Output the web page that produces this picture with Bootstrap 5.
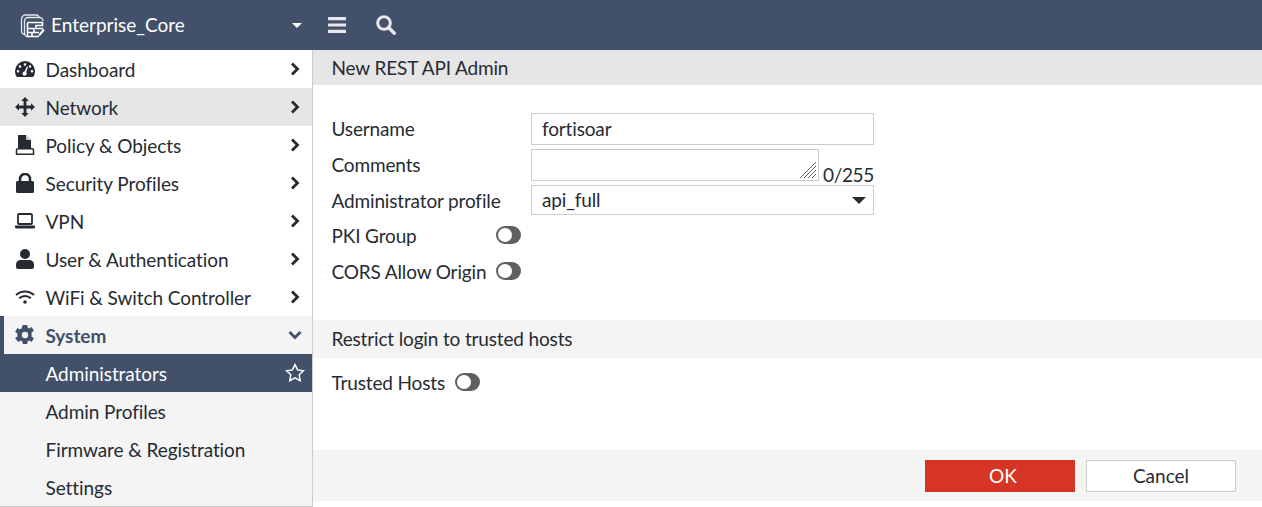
<!DOCTYPE html>
<html lang="en">

<head>
  <meta charset="UTF-8">
  <meta name="viewport" content="width=device-width, initial-scale=1.0">
  <title>New REST API Admin</title>
  <link href="https://cdn.jsdelivr.net/npm/bootstrap@5.3.3/dist/css/bootstrap.min.css" rel="stylesheet" />
  <style>
    html, body { height: 507px; overflow: hidden; }
    body { font-family: Lato, "Liberation Sans", sans-serif; font-size: 19px; letter-spacing: -.15px; color: #262b33; background: #fff; }
    .top-bar { height: 50px; background: #42506a; color: #fff; }
    .brand-box { width: 313px; padding: 0 11px 0 20px; }
    .brand-name { margin-left: 6px; letter-spacing: 0; }
    .brand-caret { width: 0; height: 0; border-left: 5px solid transparent; border-right: 5px solid transparent; border-top: 5px solid #fff; }
    .top-icon { color: #e6e8ec; }
    .menu-ico { margin-left: 15px; }
    .find-ico { margin-left: 30px; }
    .side-menu { width: 313px; height: 457px; border-right: 1px solid #ccc; border-bottom: 1px solid #ccc; background: #fff; overflow: hidden; flex: none; letter-spacing: -.07px; }
    .side-item { height: 38px; padding: 2px 12px 0 14px; color: #262b33; text-decoration: none; }
    .side-item .side-ico { width: 21px; margin-right: 10.5px; margin-top: -2px; flex: none; display: flex; justify-content: center; }
    .side-item .side-arrow { margin-top: -3px; }
    .side-item.is-hover { background: #e6e6e6; }
    .side-item.is-open { background: #f4f4f4; border-left: 4px solid #42506a; padding-left: 10px; padding-right: 10px; color: #42506a; font-weight: 700; }
    .side-item.is-active { background: #42506a; color: #fff; padding-left: 45.5px; padding-right: 7px; }
    .side-sub { background: #f4f4f4; }
    .side-sub .side-item { padding-left: 45.5px; }
    .page-title { height: 35px; background: #e6e6e6; padding: 2px 0 0 18.5px; }
    .form-area { padding: 28px 0 0 18.5px; height: 235px; }
    .form-line { height: 36px; }
    .form-lbl { width: 199.5px; flex: none; }
    .lbl-user { margin-top: 2px; }
    .lbl-next { margin-top: 2px; }
    .fake-input { width: 343px; height: 32px; border: 1px solid #ccc; padding: 0 10px 2px; font: inherit; letter-spacing: inherit; color: inherit; border-radius: 0; outline: 0; background: #fff; }
    .fake-area { width: 288px; height: 32px; border: 1px solid #ccc; position: relative; flex: none; }
    .grip { position: absolute; right: 1px; bottom: 1px; }
    .count-txt { margin-left: 4px; line-height: 20px; align-self: flex-end; letter-spacing: -.35px; }
    .fake-select { height: 30px; position: relative; line-height: 28px; padding-bottom: 0; }
    .sel-caret { position: absolute; right: 7px; top: 11px; width: 0; height: 0; border-left: 7px solid transparent; border-right: 7px solid transparent; border-top: 7px solid #262b33; }
    .tog { width: 25px; height: 18px; border-radius: 9px; background: #5f5f5f; position: relative; flex: none; display: block; }
    .tog::after { content: ""; position: absolute; left: 2px; top: 2px; width: 14px; height: 14px; border-radius: 50%; background: #fff; }
    .tog-wrap { width: 164.5px; flex: none; margin-bottom: 5px; }
    .tog-side { margin-bottom: 8px; }
    .section-head { height: 38px; background: #f4f4f4; padding-left: 18.5px; }
    .trusted-row { height: 92px; padding: 11px 0 0 18.5px; }
    .trusted-row .tog { margin-left: 10px; margin-top: 4px; }
    .action-bar { height: 51px; background: #f4f4f4; padding-right: 26px; gap: 11px; }
    .act-btn { width: 150px; height: 32px; font-size: 19px; border-radius: 0; padding: 0; line-height: 1; }
    .act-ok { background: #d63526; border: 0; color: #fff; padding-left: 6px; }
    .act-cancel { background: #fff; border: 1px solid #ccc; color: #262b33; }
  </style>
</head>

<body>
  <header class="top-bar d-flex align-items-center">
    <div class="brand-box d-flex align-items-center">
      <svg width="25" height="25" viewBox="0 0 25 25" fill="none" stroke="#fff" stroke-width="1.3">
        <path d="M5 21.500A3.500 3.500 0 0 1 1.500 18V6A4 4 0 0 1 5.500 2H16A3 3 0 0 1 19 4" opacity=".85"/>
        <path d="M8 23.500A3.500 3.500 0 0 1 4.500 20V8A3.500 3.500 0 0 1 8 4.500H19.500A3.500 3.500 0 0 1 23 8" opacity=".85"/>
        <path d="M7.500 9.500H22.500V12.500H16V15.500H23M7.500 9.500V23.500H19" stroke-width="1.600"/>
        <path d="M7.500 15.500H14V19.500M7.500 19.500H19M12 19.500V23.500" stroke-width="1.600"/>
        <path d="M19 22.500 24 16.500" stroke-width="2"/>
      </svg>
      <span class="brand-name">Enterprise_Core</span>
      <span class="brand-caret ms-auto"></span>
    </div>
    <svg class="top-icon menu-ico" width="18" height="16" viewBox="0 0 18 16" fill="currentColor"><rect width="18" height="3.200" y="0" rx=".5"/><rect width="18" height="3.200" y="6.400" rx=".5"/><rect width="18" height="3.200" y="12.800" rx=".5"/></svg>
    <svg class="top-icon find-ico" width="20" height="20" viewBox="0 0 20 20" fill="none" stroke="currentColor"><circle cx="8" cy="8" r="6.300" stroke-width="3"/><path d="M12.500 12.500 18.300 18.300" stroke-width="3.400" stroke-linecap="round"/></svg>
  </header>

  <div class="d-flex">
    <nav class="side-menu">
      <a class="side-item d-flex align-items-center" href="#">
        <span class="side-ico"><svg width="20" height="16" viewBox="0 0 20 16"><path fill="#262b33" fill-rule="evenodd" d="M10 0a10 10 0 0 1 10 10c0 2-.5 4-1.500 5.500a1 1 0 0 1-1 .5H2.500a1 1 0 0 1-1-.5C.5 14 0 12 0 10A10 10 0 0 1 10 0zM10 2.200a1.300 1.300 0 1 0 0 2.600 1.300 1.300 0 0 0 0-2.600zM5 4.200a1.300 1.300 0 1 0 0 2.600 1.300 1.300 0 0 0 0-2.600zM15 4.200a1.300 1.300 0 1 0 0 2.600 1.300 1.300 0 0 0 0-2.600zM3 9a1.300 1.300 0 1 0 0 2.600A1.300 1.300 0 0 0 3 9zM17 9a1.300 1.300 0 1 0 0 2.600A1.300 1.300 0 0 0 17 9zM12 5.500 9.500 10.600a2 2 0 1 0 1.600.6L13 6z"/></svg></span>
        Dashboard<span class="side-arrow ms-auto d-flex"><svg width="10" height="14" viewBox="0 0 10 14" fill="none" stroke="#262b33" stroke-width="2.800"><path d="M2 1.500 7.500 7 2 12.500"/></svg></span>
      </a>
      <a class="side-item is-hover d-flex align-items-center" href="#">
        <span class="side-ico"><svg width="20" height="20" viewBox="0 0 20 20" fill="#262b33"><path d="M10 0l3.800 4h-2.400v4.600H16V6.200l4 3.800-4 3.800v-2.400h-4.600V16h2.400L10 20l-3.800-4h2.400v-4.600H4v2.400L0 10l4-3.800v2.400h4.600V4H6.200z"/></svg></span>
        Network<span class="side-arrow ms-auto d-flex"><svg width="10" height="14" viewBox="0 0 10 14" fill="none" stroke="#262b33" stroke-width="2.800"><path d="M2 1.500 7.500 7 2 12.500"/></svg></span>
      </a>
      <a class="side-item d-flex align-items-center" href="#">
        <span class="side-ico"><svg width="20" height="20" viewBox="0 0 20 20"><path fill="#262b33" d="M3 0h8l5 5v8H3z"/><path fill="#fff" d="M11 0l5 5h-5z"/><path fill="#262b33" d="M11 1l4 4h-4z" opacity=".3"/><path fill="none" stroke="#262b33" stroke-width="1.500" d="M1.500 19.200v-4a1.500 1.500 0 0 1 1.500-1.500h14a1.500 1.500 0 0 1 1.500 1.500v4z"/></svg></span>
        Policy &amp; Objects<span class="side-arrow ms-auto d-flex"><svg width="10" height="14" viewBox="0 0 10 14" fill="none" stroke="#262b33" stroke-width="2.800"><path d="M2 1.500 7.500 7 2 12.500"/></svg></span>
      </a>
      <a class="side-item d-flex align-items-center" href="#">
        <span class="side-ico"><svg width="18" height="20" viewBox="0 0 18 20"><rect y="8" width="18" height="12" rx="1.500" fill="#262b33"/><path fill="none" stroke="#262b33" stroke-width="2.600" d="M4 9V6a5 5 0 0 1 10 0v3"/></svg></span>
        Security Profiles<span class="side-arrow ms-auto d-flex"><svg width="10" height="14" viewBox="0 0 10 14" fill="none" stroke="#262b33" stroke-width="2.800"><path d="M2 1.500 7.500 7 2 12.500"/></svg></span>
      </a>
      <a class="side-item d-flex align-items-center" href="#">
        <span class="side-ico"><svg width="20" height="16" viewBox="0 0 20 16"><rect x="3" y="1" width="14" height="10" rx="1" fill="none" stroke="#262b33" stroke-width="1.800"/><path fill="#262b33" d="M0 12.500h20v1.500a1.500 1.500 0 0 1-1.500 1.500h-17A1.500 1.500 0 0 1 0 14z"/></svg></span>
        VPN<span class="side-arrow ms-auto d-flex"><svg width="10" height="14" viewBox="0 0 10 14" fill="none" stroke="#262b33" stroke-width="2.800"><path d="M2 1.500 7.500 7 2 12.500"/></svg></span>
      </a>
      <a class="side-item d-flex align-items-center" href="#">
        <span class="side-ico"><svg width="18" height="20" viewBox="0 0 18 20" fill="#262b33"><circle cx="9" cy="5" r="5"/><path d="M0 18v-2.500A4.500 4.500 0 0 1 4.500 11h9a4.500 4.500 0 0 1 4.500 4.500V18a2 2 0 0 1-2 2H2a2 2 0 0 1-2-2z"/></svg></span>
        User &amp; Authentication<span class="side-arrow ms-auto d-flex"><svg width="10" height="14" viewBox="0 0 10 14" fill="none" stroke="#262b33" stroke-width="2.800"><path d="M2 1.500 7.500 7 2 12.500"/></svg></span>
      </a>
      <a class="side-item d-flex align-items-center" href="#">
        <span class="side-ico"><svg width="20" height="14" viewBox="0 0 20 14" fill="none" stroke="#262b33" stroke-width="2"><path d="M1 5a13 13 0 0 1 18 0M4.200 8.200a8.500 8.500 0 0 1 11.600 0"/><circle cx="10" cy="12" r="1.800" fill="#262b33" stroke="none"/></svg></span>
        WiFi &amp; Switch Controller<span class="side-arrow ms-auto d-flex"><svg width="10" height="14" viewBox="0 0 10 14" fill="none" stroke="#262b33" stroke-width="2.800"><path d="M2 1.500 7.500 7 2 12.500"/></svg></span>
      </a>
      <a class="side-item is-open d-flex align-items-center" href="#">
        <span class="side-ico"><svg width="20" height="20" viewBox="0 0 20 20"><path fill="#42506a" fill-rule="evenodd" d="M7.800 0h4.400l.5 2.800 1.500.7 2.400-1.500 2.300 3.800-2.300 1.700v4l2.300 1.700-2.300 3.800-2.400-1.500-1.500.7-.5 2.800H7.800l-.5-2.800-1.500-.7-2.400 1.500L.1 13.200 2.400 11.500v-3L.1 6.800l2.300-3.800 2.400 1.500 1.500-.7zM10 6.800a3.200 3.200 0 1 0 0 6.400 3.200 3.200 0 0 0 0-6.400z"/></svg></span>
        System<span class="side-arrow ms-auto d-flex"><svg width="14" height="10" viewBox="0 0 14 10" fill="none" stroke="#42506a" stroke-width="2.800"><path d="M1.500 2 7 7.500 12.500 2"/></svg></span>
      </a>
      <div class="side-sub">
        <a class="side-item is-active d-flex align-items-center" href="#">
          Administrators<span class="side-arrow ms-auto d-flex"><svg width="20" height="19" viewBox="0 0 20 19" fill="none" stroke="#fff" stroke-width="1.500"><path d="M10 1.500l2.600 5.400 5.900.8-4.300 4.100 1 5.900L10 14.900l-5.200 2.800 1-5.900L1.500 7.700l5.900-.8z"/></svg></span>
        </a>
        <a class="side-item d-flex align-items-center" href="#">Admin Profiles</a>
        <a class="side-item d-flex align-items-center" href="#">Firmware &amp; Registration</a>
        <a class="side-item d-flex align-items-center" href="#">Settings</a>
      </div>
    </nav>

    <main class="flex-grow-1">
      <div class="page-title d-flex align-items-center">New REST API Admin</div>
      <div class="form-area">
        <div class="form-line d-flex align-items-start">
          <label class="form-lbl lbl-user">Username</label>
          <input class="fake-input" type="text" value="fortisoar">
        </div>
        <div class="form-line d-flex align-items-start">
          <label class="form-lbl lbl-next">Comments</label>
          <div class="fake-area">
            <svg class="grip" width="18" height="18" viewBox="0 0 18 18" stroke="#666" fill="none"><path d="M1 17 17 1M5 17 17 5M9 17l8-8M13 17l4-4"/></svg>
          </div>
          <span class="count-txt">0/255</span>
        </div>
        <div class="form-line d-flex align-items-start">
          <label class="form-lbl lbl-next">Administrator profile</label>
          <div class="fake-input fake-select">api_full<span class="sel-caret"></span></div>
        </div>
        <div class="form-line d-flex align-items-center">
          <label class="tog-wrap">PKI Group</label>
          <span class="tog tog-side"></span>
        </div>
        <div class="form-line d-flex align-items-center">
          <label class="tog-wrap text-nowrap">CORS Allow Origin</label>
          <span class="tog tog-side"></span>
        </div>
      </div>
      <div class="section-head d-flex align-items-center">Restrict login to trusted hosts</div>
      <div class="trusted-row d-flex align-items-start">
        <label>Trusted Hosts</label>
        <span class="tog"></span>
      </div>
      <div class="action-bar d-flex align-items-center justify-content-end">
        <button class="btn act-btn act-ok" type="button">OK</button>
        <button class="btn act-btn act-cancel" type="button">Cancel</button>
      </div>
    </main>
  </div>

  <script src="https://cdn.jsdelivr.net/npm/bootstrap@5.3.3/dist/js/bootstrap.bundle.min.js"></script>
</body>

</html>
